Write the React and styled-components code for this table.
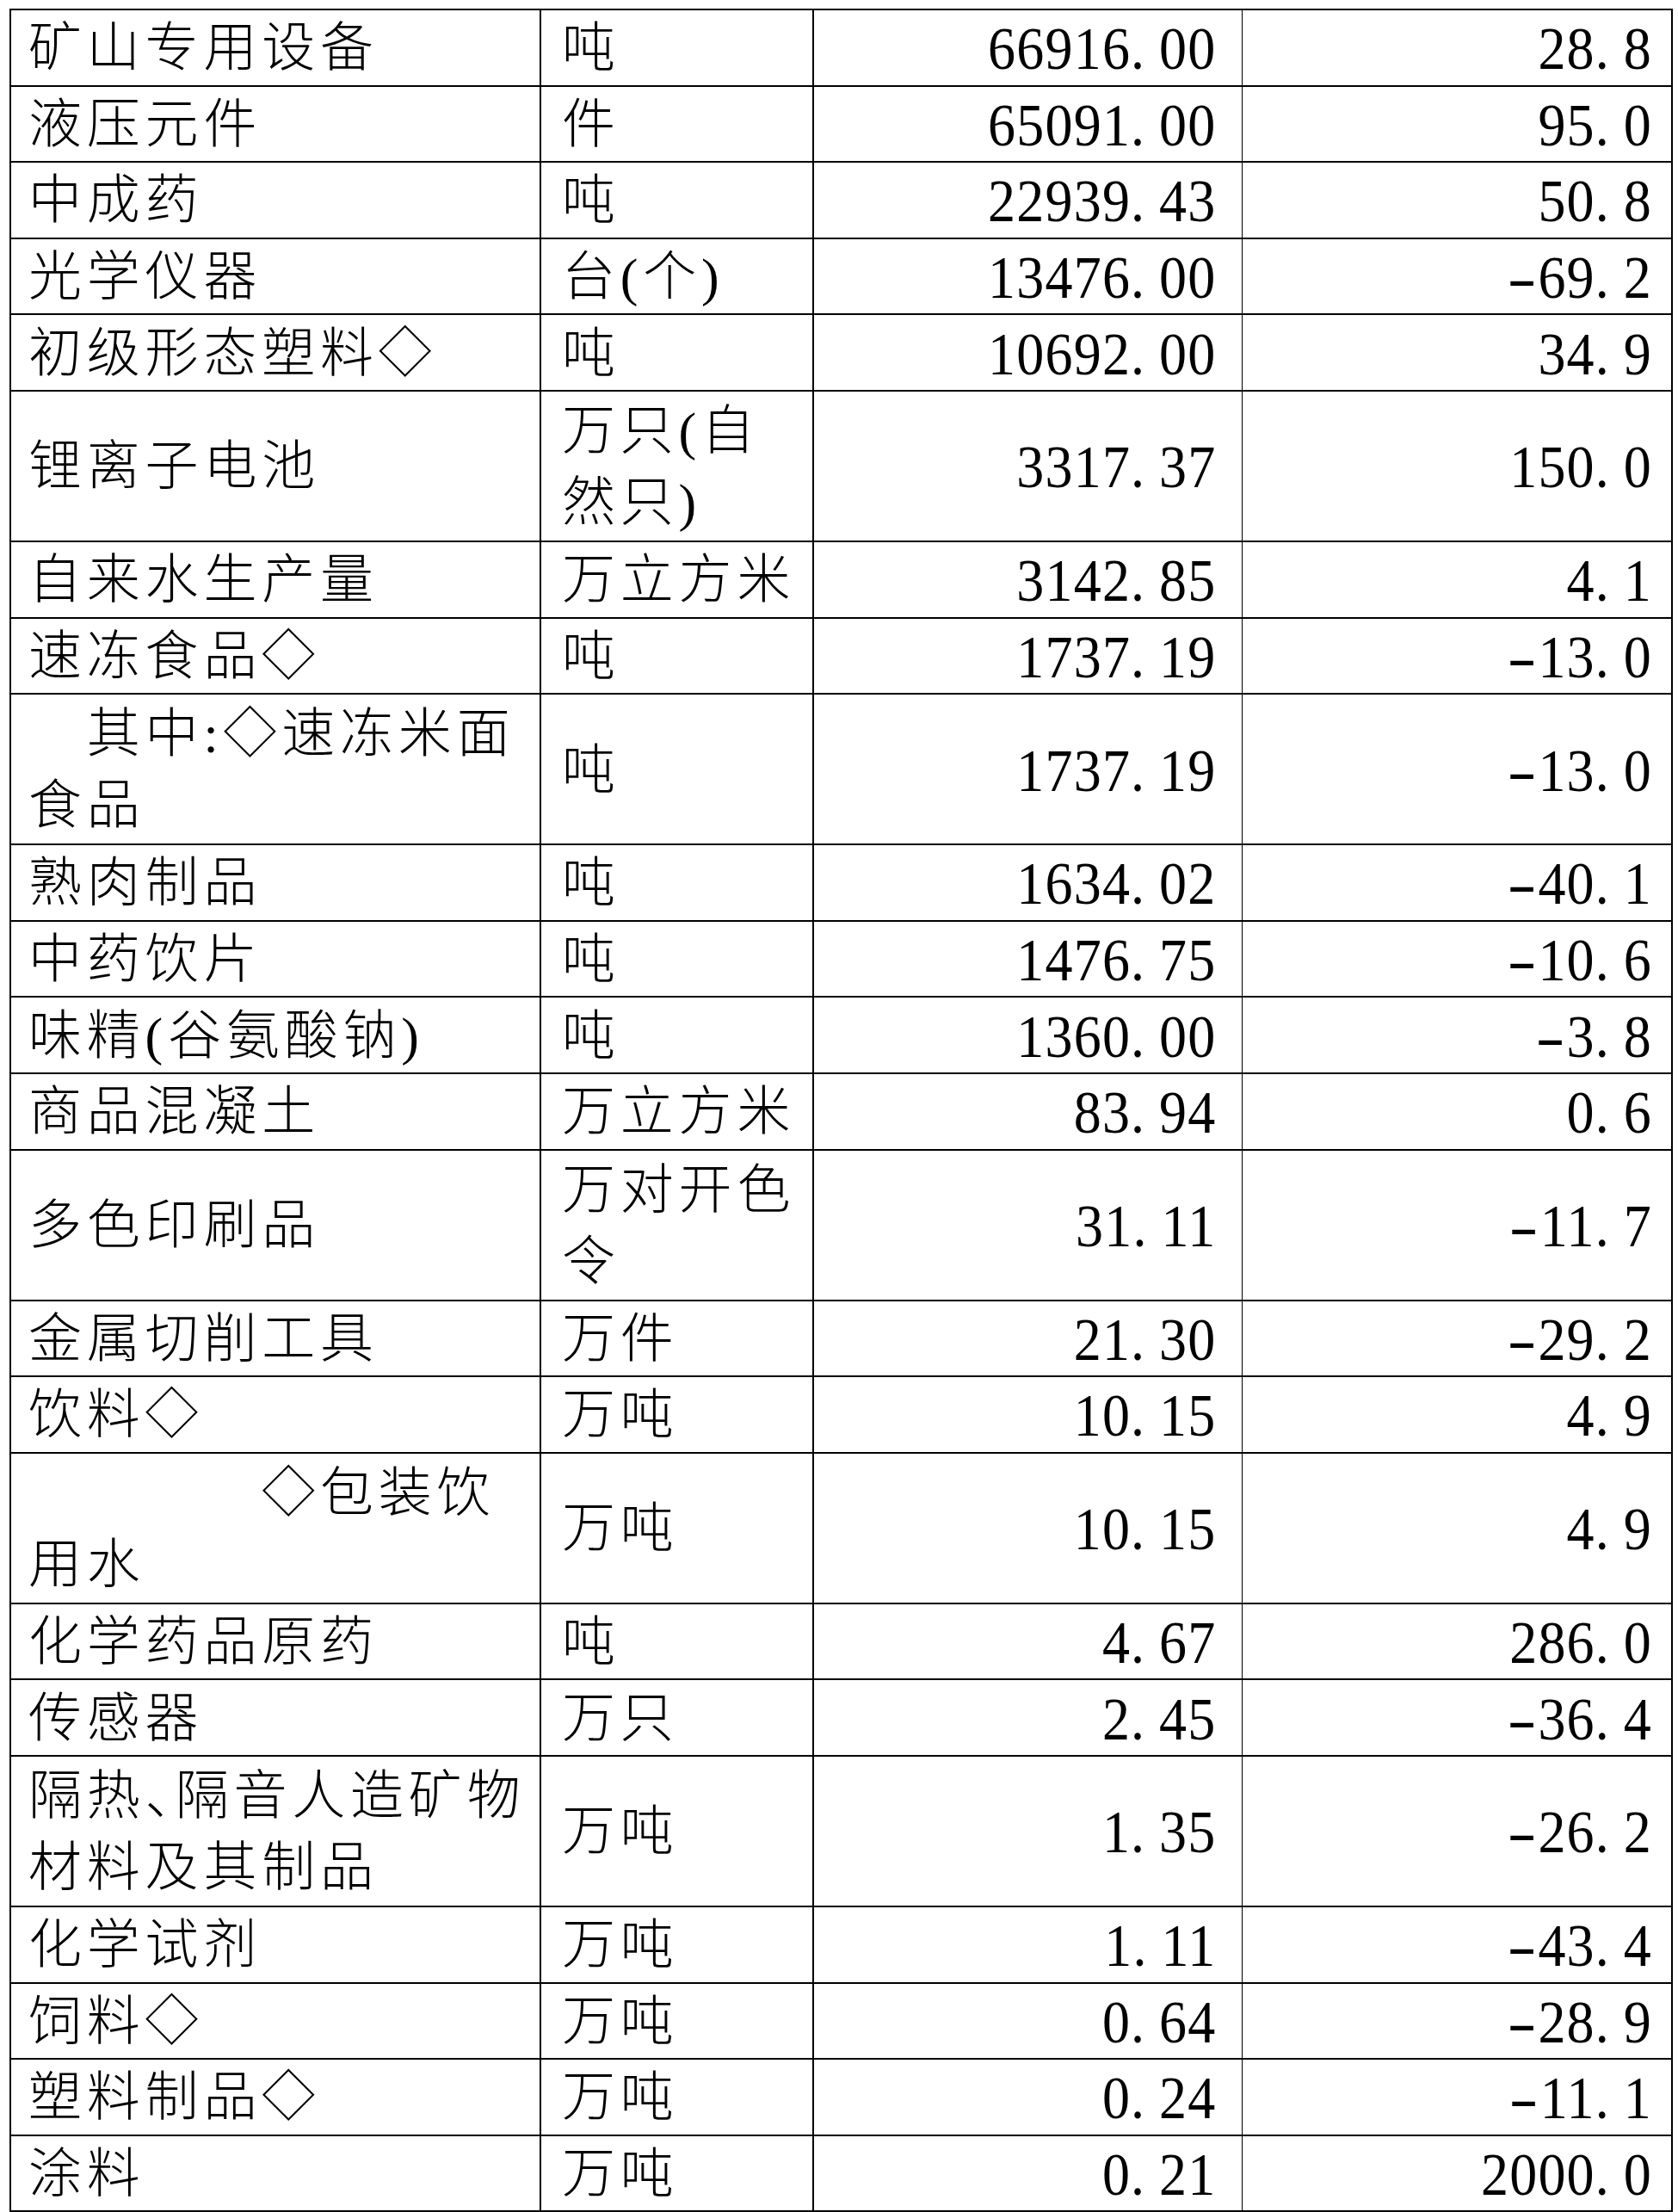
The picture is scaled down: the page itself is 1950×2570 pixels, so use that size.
import React from 'react';
import styled, { createGlobalStyle } from 'styled-components';

const GlobalStyle = createGlobalStyle`
  html, body {
    margin: 0;
    padding: 0;
    background: #fff;
  }
  body {
    font-family: "Liberation Serif", "Noto Sans CJK SC", serif;
    color: #000;
  }
`;

const rows = [
  { name: '矿山专用设备', unit: '吨', output: '66916.00', growth: '28.8' },
  { name: '液压元件', unit: '件', output: '65091.00', growth: '95.0' },
  { name: '中成药', unit: '吨', output: '22939.43', growth: '50.8' },
  { name: '光学仪器', unit: '台(个)', output: '13476.00', growth: '-69.2' },
  { name: '初级形态塑料◇', unit: '吨', output: '10692.00', growth: '34.9' },
  { name: '锂离子电池', unit: ['万只(自', '然只)'], output: '3317.37', growth: '150.0' },
  { name: '自来水生产量', unit: '万立方米', output: '3142.85', growth: '4.1' },
  { name: '速冻食品◇', unit: '吨', output: '1737.19', growth: '-13.0' },
  { name: ['\u3000其中:◇速冻米面', '食品'], unit: '吨', output: '1737.19', growth: '-13.0' },
  { name: '熟肉制品', unit: '吨', output: '1634.02', growth: '-40.1' },
  { name: '中药饮片', unit: '吨', output: '1476.75', growth: '-10.6' },
  { name: '味精(谷氨酸钠)', unit: '吨', output: '1360.00', growth: '-3.8' },
  { name: '商品混凝土', unit: '万立方米', output: '83.94', growth: '0.6' },
  { name: '多色印刷品', unit: ['万对开色', '令'], output: '31.11', growth: '-11.7' },
  { name: '金属切削工具', unit: '万件', output: '21.30', growth: '-29.2' },
  { name: '饮料◇', unit: '万吨', output: '10.15', growth: '4.9' },
  { name: ['\u3000\u3000\u3000\u3000◇包装饮', '用水'], unit: '万吨', output: '10.15', growth: '4.9' },
  { name: '化学药品原药', unit: '吨', output: '4.67', growth: '286.0' },
  { name: '传感器', unit: '万只', output: '2.45', growth: '-36.4' },
  { name: ['隔热、隔音人造矿物', '材料及其制品'], unit: '万吨', output: '1.35', growth: '-26.2' },
  { name: '化学试剂', unit: '万吨', output: '1.11', growth: '-43.4' },
  { name: '饲料◇', unit: '万吨', output: '0.64', growth: '-28.9' },
  { name: '塑料制品◇', unit: '万吨', output: '0.24', growth: '-11.1' },
  { name: '涂料', unit: '万吨', output: '0.21', growth: '2000.0' },
];

const Page = styled.div`
  width: 1950px;
  min-height: 2570px;
  padding: 10px 0 0 11px;
  box-sizing: border-box;
`;

const Table = styled.table`
  width: 1931px;
  border-collapse: collapse;
  table-layout: fixed;
`;

const Col = styled.col`
  width: ${({ $w }) => $w}px;
`;

const Row = styled.tr`
  height: ${({ $tall }) => ($tall ? '175px' : '88.6px')};
`;

const Cell = styled.td`
  border: 2px solid #000;
  border-right-width: ${({ $thinRight }) => ($thinRight ? '1px' : '2px')};
  border-left-width: ${({ $thinLeft }) => ($thinLeft ? '1px' : '2px')};
  padding: 3px ${({ $padR }) => $padR ?? 0}px 0 ${({ $padL }) => $padL ?? 0}px;
  vertical-align: middle;
  white-space: nowrap;
  overflow: hidden;
  font-size: 62px;
  line-height: 83px;
  font-weight: 300;
  letter-spacing: 5.8px;
  text-align: left;
`;

const NumCell = styled(Cell)`
  text-align: right;
  font-weight: 400;
  font-size: 64px;
  letter-spacing: 1.2px;
`;

const NumText = styled.span`
  display: inline-block;
  transform: scaleY(1.08);
`;

const Dot = styled.span`
  letter-spacing: 17px;
`;

const Minus = styled.span`
  display: inline-block;
  transform: scaleX(1.6);
  transform-origin: right center;
  margin-left: 10px;
`;

const Comma = styled.span`
  letter-spacing: -27px;
`;

function renderText(text) {
  if (!text.includes('、')) return text;
  const parts = text.split('、');
  return parts.map((p, i) => (
    <React.Fragment key={i}>
      {p}
      {i < parts.length - 1 && <Comma>、</Comma>}
    </React.Fragment>
  ));
}

function Lines({ value }) {
  const list = Array.isArray(value) ? value : [value];
  return list.map((line, i) => (
    <React.Fragment key={i}>
      {i > 0 && <br />}
      {renderText(line)}
    </React.Fragment>
  ));
}

function Num({ value }) {
  const negative = value.startsWith('-');
  const [a, b] = (negative ? value.slice(1) : value).split('.');
  return (
    <NumText>
      {negative && <Minus>-</Minus>}
      {a}
      <Dot>.</Dot>
      {b}
    </NumText>
  );
}

export default function App() {
  return (
    <Page>
      <GlobalStyle />
      <Table>
        <colgroup>
          <Col $w={616} />
          <Col $w={317} />
          <Col $w={498} />
          <Col $w={500} />
        </colgroup>
        <tbody>
          {rows.map((r, i) => {
            const tall = Array.isArray(r.name) || Array.isArray(r.unit);
            return (
              <Row key={i} $tall={tall}>
                <Cell $padL={20}>
                  <Lines value={r.name} />
                </Cell>
                <Cell $padL={24}>
                  <Lines value={r.unit} />
                </Cell>
                <NumCell $padR={29} $thinRight>
                  <Num value={r.output} />
                </NumCell>
                <NumCell $padR={22} $thinLeft>
                  <Num value={r.growth} />
                </NumCell>
              </Row>
            );
          })}
        </tbody>
      </Table>
    </Page>
  );
}
